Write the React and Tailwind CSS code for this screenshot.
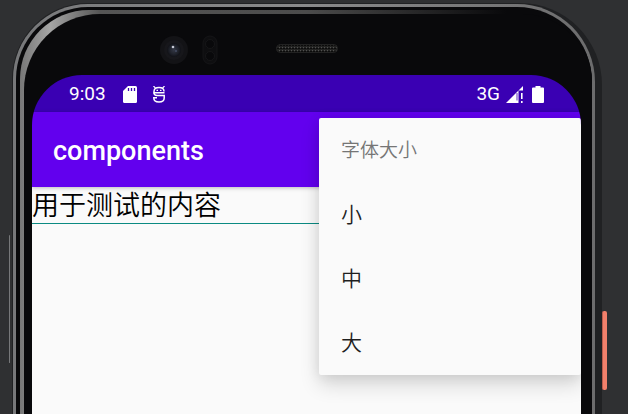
const sizes = ['小', '中', '大'];

function SdCard() {
  return (
    <svg viewBox="0 0 14 17" className="h-[17px] w-[14px]" fill="none" aria-hidden="true">
      <path d="M5 0H12.500Q14 0 14 1.500V15.500Q14 17 12.500 17H1.500Q0 17 0 15.500V5Z" fill="#fff" />
      <path d="M5.500 2V5M8.500 2V5M11.500 2V5" stroke="#3a00b3" strokeWidth="1.300" />
    </svg>
  );
}

function DebugIcon() {
  return (
    <svg viewBox="0 0 14 17" className="h-[17px] w-[14px]" fill="none" stroke="#fff" strokeWidth="1.500" aria-hidden="true">
      <path d="M1.500 0L3.500 2.200M12.500 0L10.500 2.200" strokeWidth="1.200" />
      <path d="M12.500 6.800H2V5.500C2 3 4 1.500 7 1.500S12 3 12 5.500" />
      <path d="M4.500 4.300H6M8 4.300H9.500" strokeWidth="1.300" />
      <path d="M2 6.500Q2 9.500 5 9.500H12.200V12Q12.200 16 7 16T1.800 12V11.800H5" />
    </svg>
  );
}

function SignalIcon() {
  return (
    <svg viewBox="0 0 18 17" className="h-[17px] w-[18px]" aria-hidden="true">
      <path d="M0 17L12.500 4.500V17Z" fill="#fff" />
      <path d="M12.500 4.500L17 0V4.500Z" fill="#fff" />
      <path d="M11 7V14.500" fill="none" stroke="#3a00b3" strokeWidth="0.800" />
      <path d="M15 7H16.600V13H15ZM15 15H16.600V17H15Z" fill="#fff" />
    </svg>
  );
}

function BatteryIcon() {
  return (
    <svg viewBox="0 0 12 17" className="h-[17px] w-3" fill="#fff" aria-hidden="true">
      <path d="M3.500 0H8.500V1.500H11Q12 1.500 12 2.500V16Q12 17 11 17H1Q0 17 0 16V2.500Q0 1.500 1 1.500H3.500Z" />
    </svg>
  );
}

function Bezel() {
  return (
    <div className="grid h-[61px] grid-cols-[1fr_auto_1fr] pt-[21px]">
      <div className="flex justify-end gap-3.5 pr-[58px]">
        <svg viewBox="0 0 30 30" className="h-[30px] w-[30px]" aria-hidden="true">
          <defs>
            <radialGradient id="lens">
              <stop offset="0" stopColor="#343846" />
              <stop offset="0.600" stopColor="#20232c" />
              <stop offset="1" stopColor="#101116" />
            </radialGradient>
          </defs>
          <circle cx="16" cy="15" r="14" fill="#131316" />
          <circle cx="16" cy="15" r="10" fill="#17171b" />
          <circle cx="16" cy="15" r="7" fill="url(#lens)" />
          <circle cx="15" cy="12" r="1.300" fill="#c5c8d4" />
          <circle cx="18" cy="16" r="1" fill="#454c63" />
        </svg>
        <svg viewBox="0 0 16 30" className="h-[30px] w-4" aria-hidden="true">
          <rect x="1" y="1" width="14" height="28" rx="7" fill="#0e0e10" stroke="#151517" />
          <circle cx="8" cy="9" r="4.500" fill="#09090b" stroke="#161618" />
          <circle cx="8" cy="21" r="4.500" fill="#09090b" stroke="#161618" />
        </svg>
      </div>
      <svg viewBox="0 0 62 9" className="mt-[9px] h-[9px] w-[62px]" aria-hidden="true">
        <defs>
          <pattern id="mesh" width="3" height="3" patternUnits="userSpaceOnUse">
            <rect width="3" height="3" fill="#222221" />
            <rect width="1" height="1" fill="#50504f" />
            <rect x="1" y="1" width="2" height="1" fill="#0b0b0b" />
          </pattern>
        </defs>
        <rect x="0.500" y="0.500" width="61" height="8" rx="4" fill="url(#mesh)" stroke="#222222" />
      </svg>
    </div>
  );
}

function Menu() {
  return (
    <div
      role="menu"
      aria-labelledby="menu-title"
      className="absolute top-[43px] right-0 w-[262px] rounded-[2px] bg-[#fafafa] pt-px font-[350] shadow-[0_10px_20px_rgba(0,0,0,0.14),0_1px_14px_rgba(0,0,0,0.09)]"
    >
      <div id="menu-title" className="flex h-16 items-center px-[22px] pt-px text-[19px] text-[#757575]">
        字体大小
      </div>
      {sizes.map((size) => (
        <button key={size} type="button" role="menuitem" className="flex h-16 w-full items-center px-[22px] pt-0.5 text-[21px] text-[#1f1f1f]">
          {size}
        </button>
      ))}
    </div>
  );
}

function Screen() {
  return (
    <div className="relative flex grow flex-col overflow-hidden rounded-t-[50px]">
      <div className="flex h-[37px] items-center bg-[#3a00b3] px-[37px] pt-0.5 text-[19px] text-white">
        <span>9:03</span>
        <span className="ml-[17px]"><SdCard /></span>
        <span className="ml-[15px]"><DebugIcon /></span>
        <span className="ml-auto">3G</span>
        <span className="ml-1.5"><SignalIcon /></span>
        <span className="ml-2"><BatteryIcon /></span>
      </div>
      <header className="z-10 flex h-[75px] items-center bg-[#6200ee] px-[21px] pt-1 shadow-[0_1px_4px_rgba(0,0,0,0.25)]">
        <h1 className="text-[27px] font-medium text-white">components</h1>
      </header>
      <main className="grow bg-[#fafafa]">
        <input
          aria-label="内容"
          defaultValue="用于测试的内容"
          className="block h-9 w-full bg-transparent pt-0.5 text-[27px] font-[350] text-black outline-none"
        />
        <div className="h-px bg-[#0b8a82]" />
      </main>
      <div className="absolute inset-0 z-20">
        <Menu />
      </div>
    </div>
  );
}

export default function App() {
  return (
    <div className="relative flex min-h-screen flex-col overflow-hidden bg-[#2f3032] font-[Roboto,'Noto_Sans_CJK_SC',sans-serif]">
      <div className="absolute top-[235px] left-[9px] h-[128px] w-px rounded-full bg-[#77787a]" />
      <div className="absolute top-[311px] right-[21px] h-[79px] w-[5px] rounded-[2px] border-l border-[#b95d4d] bg-[#f2806b]" />
      <div className="mt-[3px] mr-[26px] ml-3 flex grow flex-col rounded-tl-[76px] rounded-tr-[82px] bg-[#202123] pt-px pr-[7px] pl-px">
        <div className="flex grow flex-col rounded-tl-[75px] rounded-tr-[78px] bg-linear-to-r from-[#77787a] via-[#8a8a8b] to-[#6c6c6d] pt-[3px] pr-[3px] pl-[3px]">
          <div className="flex grow flex-col rounded-tl-[72px] rounded-tr-[75px] bg-[#09090b] pt-[3px] pl-1">
            <div className="flex grow flex-col rounded-tl-[69px] rounded-tr-[72px] bg-[linear-gradient(90deg,#777777_0,#a5a5a5_30px,#555555_80px,#4c4c4c_50%,#09090b_85%)] pt-1 pl-1">
              <div className="flex grow flex-col rounded-tl-[76px] rounded-tr-[70px] bg-[#09090b] pr-[11px] pl-2">
                <Bezel />
                <Screen />
              </div>
            </div>
          </div>
        </div>
      </div>
    </div>
  );
}
